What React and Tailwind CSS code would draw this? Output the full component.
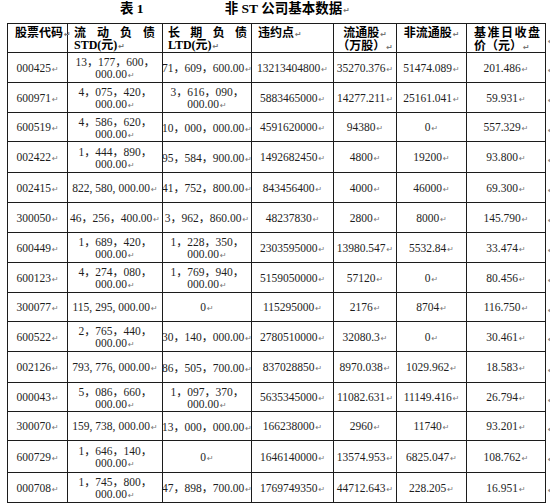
import React from "react";

const W = ["w-[61px] border-l", "w-[95px]", "w-[89px]", "w-[82px]", "w-[63px]", "w-[70px]", "w-[79px]"];

const rows = [
  [30, "000425", ["13，177，600，", "000.00"], ["71，609，600.00"], "13213404800", "35270.376", "51474.089", "201.486"],
  [30, "600971", ["4，075，420，", "000.00"], ["3，616，090，", "000.00"], "5883465000", "14277.211", "25161.041", "59.931"],
  [29, "600519", ["4，586，620，", "000.00"], ["10，000，000.00"], "4591620000", "94380", "0", "557.329"],
  [31, "002422", ["1，444，890，", "000.00"], ["95，584，900.00"], "1492682450", "4800", "19200", "93.800"],
  [30, "002415", ["822，580，000.00", "t"], ["41，752，800.00"], "843456400", "4000", "46000", "69.300"],
  [30, "300050", ["46，256，400.00"], ["3，962，860.00"], "48237830", "2800", "8000", "145.790"],
  [30, "600449", ["1，689，420，", "000.00"], ["1，228，350，", "000.00"], "2303595000", "13980.547", "5532.84", "33.474"],
  [30, "600123", ["4，274，080，", "000.00"], ["1，769，940，", "000.00"], "5159050000", "57120", "0", "80.456"],
  [29, "300077", ["115，295，000.00", "t"], ["0"], "115295000", "2176", "8704", "116.750"],
  [30, "600522", ["2，765，440，", "000.00"], ["30，140，000.00"], "2780510000", "32080.3", "0", "30.461"],
  [31, "002126", ["793，776，000.00", "t"], ["86，505，700.00"], "837028850", "8970.038", "1029.962", "18.583"],
  [29, "000043", ["5，086，660，", "000.00"], ["1，097，370，", "000.00"], "5635345000", "11082.631", "11149.416", "26.794"],
  [29, "300070", ["159，738，000.00", "t"], ["13，000，000.00"], "166238000", "2960", "11740", "93.201"],
  [32, "600729", ["1，646，140，", "000.00"], ["0"], "1646140000", "13574.953", "6825.047", "108.762"],
  [30, "000708", ["1，745，800，", "000.00"], ["47，898，700.00"], "1769749350", "44712.643", "228.205", "16.951"],
];

const H = { 29: "h-[29px]", 30: "h-[30px]", 31: "h-[31px]", 32: "h-[32px]" };

function Mark() {
  return <span className="font-['DejaVu_Sans'] text-[8px] text-[#777] leading-none ml-[1px] align-baseline">↵</span>;
}

function Num({ s, tight, mark }) {
  const parts = s.split("，");
  return (
    <span className="whitespace-nowrap">
      {parts.map((p, i) => (
        <React.Fragment key={i}>
          {p}
          {i < parts.length - 1 &&
            (tight ? (
              <>
                <span>,</span>
                <span className="inline-block w-[3px]"></span>
              </>
            ) : (
              <span className="inline-block w-[11px] text-left font-['Noto_Sans_CJK_SC']">，</span>
            ))}
        </React.Fragment>
      ))}
      {mark && <Mark />}
    </span>
  );
}

function Cell({ i, children }) {
  return (
    <div className={`${W[i]} h-full shrink-0 border-r border-b border-[#1c1c1c] flex flex-col items-center justify-center leading-[12px]`}>
      {children}
    </div>
  );
}

function Amount({ v }) {
  if (v.length === 2 && v[1] !== "t") {
    return (
      <>
        <div><Num s={v[0]} /></div>
        <div><Num s={v[1]} mark /></div>
      </>
    );
  }
  return <Num s={v[0]} tight={v[1] === "t"} mark />;
}

function Spread({ chars }) {
  return (
    <div className="flex justify-between">
      {chars.map((c, i) => (
        <span key={i}>{c}</span>
      ))}
    </div>
  );
}

export default function App() {
  return (
    <div className="w-[550px] h-[504px] overflow-hidden bg-white text-[#1e1e1e] font-['Liberation_Serif','Noto_Sans_CJK_SC',serif]">
      <div className="h-[23px] flex items-start pt-[1px] font-bold text-[13.5px] leading-[16px] text-black">
        <span className="ml-[120px]">表 1</span>
        <span className="ml-[81px]">非 ST 公司基本数据<Mark /></span>
      </div>
      <div className="pl-[7px] flex flex-col">
        <div className="flex h-[30px]">
          <div className="flex font-bold text-[12px] leading-[12px] text-black">
            <div className="w-[61px] border-l border-t border-r border-b border-[#1c1c1c] pl-[7px] pt-[3px] whitespace-nowrap">股票代码<Mark /></div>
            <div className="w-[95px] border-t border-r border-b border-[#1c1c1c] pl-[6px] pr-[7px] pt-[3px]">
              <Spread chars={["流", "动", "负", "债"]} />
              <div>STD(元)<Mark /></div>
            </div>
            <div className="w-[89px] border-t border-r border-b border-[#1c1c1c] pl-[5px] pr-[4px] pt-[3px]">
              <Spread chars={["长", "期", "负", "债"]} />
              <div>LTD(元)<Mark /></div>
            </div>
            <div className="w-[82px] border-t border-r border-b border-[#1c1c1c] pl-[6px] pt-[3px]">违约点<Mark /></div>
            <div className="w-[63px] border-t border-r border-b border-[#1c1c1c] pt-[3px] text-center">
              <div>流通股<Mark /></div>
              <div className="whitespace-nowrap font-['Noto_Sans_CJK_SC']">（万股）<Mark /></div>
            </div>
            <div className="w-[70px] border-t border-r border-b border-[#1c1c1c] pt-[3px] text-center">非流通股<Mark /></div>
            <div className="w-[79px] border-t border-r border-b border-[#1c1c1c] pl-[7px] pr-[5px] pt-[3px]">
              <Spread chars={["基", "准", "日", "收", "盘"]} />
              <div className="whitespace-nowrap font-['Noto_Sans_CJK_SC']">价（元）<Mark /></div>
            </div>
          </div>
          <div className="ml-[1px] pt-[4px]"><Mark /></div>
        </div>
        {rows.map((r, k) => (
          <div key={k} className={`flex ${H[r[0]]}`}>
            <div className="flex text-[11.5px] h-full">
              <Cell i={0}><Num s={r[1]} mark /></Cell>
              <Cell i={1}><Amount v={r[2]} /></Cell>
              <Cell i={2}><Amount v={r[3]} /></Cell>
              <Cell i={3}><Num s={r[4]} mark /></Cell>
              <Cell i={4}><Num s={r[5]} mark /></Cell>
              <Cell i={5}><Num s={r[6]} mark /></Cell>
              <Cell i={6}><Num s={r[7]} mark /></Cell>
            </div>
            <div className="ml-[1px] self-center"><Mark /></div>
          </div>
        ))}
      </div>
    </div>
  );
}
